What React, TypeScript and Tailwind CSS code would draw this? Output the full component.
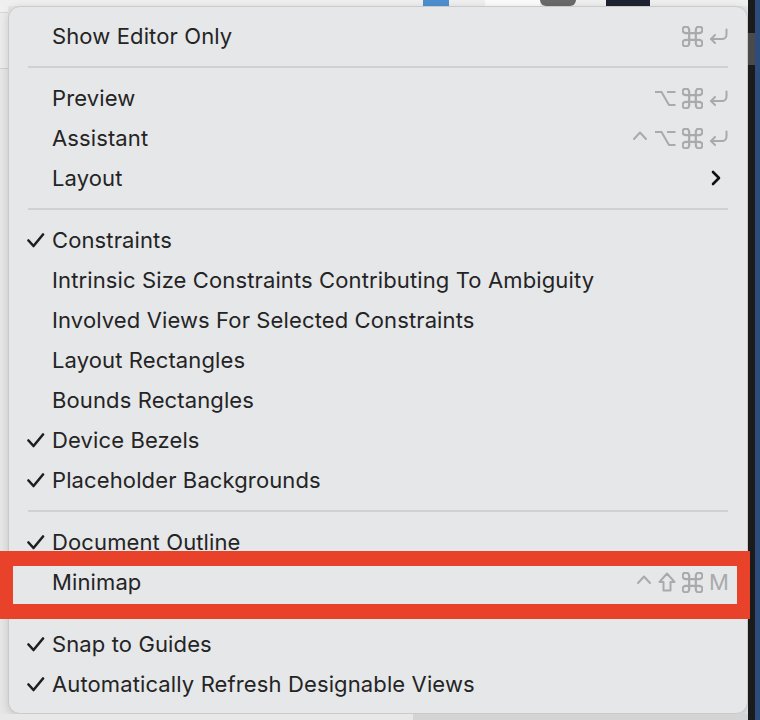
import React from "react";

type Item =
  | { type: "sep" }
  | { type: "item"; label: string; check?: boolean; keys?: string[]; submenu?: boolean };

const items: Item[] = [
  { type: "item", label: "Show Editor Only", keys: ["cmd", "ret"] },
  { type: "sep" },
  { type: "item", label: "Preview", keys: ["opt", "cmd", "ret"] },
  { type: "item", label: "Assistant", keys: ["ctrl", "opt", "cmd", "ret"] },
  { type: "item", label: "Layout", submenu: true },
  { type: "sep" },
  { type: "item", label: "Constraints", check: true },
  { type: "item", label: "Intrinsic Size Constraints Contributing To Ambiguity" },
  { type: "item", label: "Involved Views For Selected Constraints" },
  { type: "item", label: "Layout Rectangles" },
  { type: "item", label: "Bounds Rectangles" },
  { type: "item", label: "Device Bezels", check: true },
  { type: "item", label: "Placeholder Backgrounds", check: true },
  { type: "sep" },
  { type: "item", label: "Document Outline", check: true },
  { type: "item", label: "Minimap", keys: ["ctrl", "shift", "cmd", "M"] },
  { type: "sep" },
  { type: "item", label: "Snap to Guides", check: true },
  { type: "item", label: "Automatically Refresh Designable Views", check: true },
];

const G = "#a9aaac";

function Key({ k }: { k: string }) {
  const common = { fill: "none", stroke: G, strokeWidth: 2, strokeLinecap: "round" as const, strokeLinejoin: "round" as const };
  switch (k) {
    case "ret":
      return (
        <svg width="19" height="16" viewBox="0 0 19 16" {...common}>
          <path d="M2 11 H13 A4.5 4.5 0 0 0 17.5 6.5 V1.5" />
          <path d="M6 7 L2 11 L6 15" />
        </svg>
      );
    case "cmd":
      return (
        <svg width="21" height="21" viewBox="2.5 2.5 19 19" {...common} strokeWidth={2}>
          <path d="M15 6v12a3 3 0 1 0 3-3H6a3 3 0 1 0 3 3V6a3 3 0 1 0-3 3h12a3 3 0 1 0-3-3" />
        </svg>
      );
    case "opt":
      return (
        <svg width="22" height="18" viewBox="0 0 22 18" {...common} strokeLinecap="butt" strokeLinejoin="miter">
          <path d="M1 3 H7.5 L15 16 H21.5" />
          <path d="M13 3 H21.5" />
        </svg>
      );
    case "ctrl":
      return (
        <svg width="16" height="18" viewBox="0 0 16 18" {...common}>
          <path d="M2 10 L8 3.5 L14 10" />
        </svg>
      );
    case "shift":
      return (
        <svg width="18" height="20" viewBox="0 0 18 20" {...common}>
          <path d="M9 1.5 L16.5 10 H12.5 V18.5 H5.5 V10 H1.5 Z" />
        </svg>
      );
    default:
      return (
        <span className="text-[22px] leading-none text-[#a9aaac] w-[19px] text-center">{k}</span>
      );
  }
}

function Check() {
  return (
    <svg width="18" height="15" viewBox="0 0 18 15" fill="none" stroke="#1f1f1f" strokeWidth="2.6" strokeLinecap="round" strokeLinejoin="round">
      <path d="M1.5 7.5 L6.5 13 L16 1.5" />
    </svg>
  );
}

export default function App() {
  return (
    <div
      className="relative w-[760px] h-[720px] overflow-hidden flex bg-[#e6e6e6]"
      style={{ fontFamily: "Inter, 'Liberation Sans', sans-serif" }}
    >
      {/* main backdrop column */}
      <div className="w-[748px] flex flex-col">
        {/* top strip with app icons */}
        <div className="h-[6px] flex bg-[#efefef] pl-[423px]">
          <div className="w-[26px] bg-[#4f8fd0]" />
          <div className="w-[36px]" />
          <div className="w-[55px] bg-[#fbfbfb]" />
          <div className="w-[36px] rounded-b-full bg-[#6a6a6a]" />
          <div className="w-[30px]" />
          <div className="w-[44px] bg-[#1e2433]" />
        </div>

        <div className="flex flex-1">
          {/* left gutter */}
          <div className="w-[8px] flex flex-col">
            <div className="h-[7px] bg-[#f0f0f0] border-b border-[#d6d6d6]" />
            <div className="h-[56px] bg-[#ebebeb] border-b border-[#d0d0d0]" />
            <div className="flex-1 bg-[#e6e6e6]" />
          </div>

          {/* menu */}
          <div className="w-[740px] rounded-[12px] bg-[#e6e7e9] border border-[#c9cacc] shadow-[0_2px_8px_rgba(0,0,0,0.15)] py-[9px] text-[#242424]">
            {items.map((it, i) =>
              it.type === "sep" ? (
                <div key={i} className="h-[22px] flex items-center pl-[19px] pr-[19px]">
                  <div className="h-[2px] w-full bg-[#d0d1d3]" />
                </div>
              ) : (
                <div key={i} className="h-[40px] flex items-center pl-[18px] pr-[19px]">
                  <div className="w-[25px] flex items-center">{it.check && <Check />}</div>
                  <span className="text-[22px] tracking-[0.12px]">{it.label}</span>
                  <div className="flex-1" />
                  {it.keys && (
                    <div className="flex items-center gap-[6px]">
                      {it.keys.map((k, j) => (
                        <Key key={j} k={k} />
                      ))}
                    </div>
                  )}
                  {it.submenu && (
                    <svg width="12" height="16" viewBox="0 0 12 16" fill="none" stroke="#111" strokeWidth="2.6" strokeLinecap="round" strokeLinejoin="round" className="mr-[6px]">
                      <path d="M3 2 L9 8 L3 14" />
                    </svg>
                  )}
                </div>
              )
            )}
          </div>
        </div>

        {/* bottom strip */}
        <div className="h-[6px] flex">
          <div className="w-[413px] bg-[#e8e8e8]" />
          <div className="flex-1 bg-[#d4d4d4]" />
        </div>
      </div>

      {/* right window edges */}
      <div className="w-[7px] flex flex-col bg-[#1b1b1b] pt-[33px]">
        <div className="h-[32px] bg-[#4a4a4a]" />
      </div>
      <div className="w-[5px] bg-[#2b4c7c]" />

      {/* red highlight box */}
      <div className="absolute left-0 top-[551px] w-[750px] h-[68px] border-[13px] border-t-[15px] border-b-[15px] border-[#e8432a]" />
    </div>
  );
}
